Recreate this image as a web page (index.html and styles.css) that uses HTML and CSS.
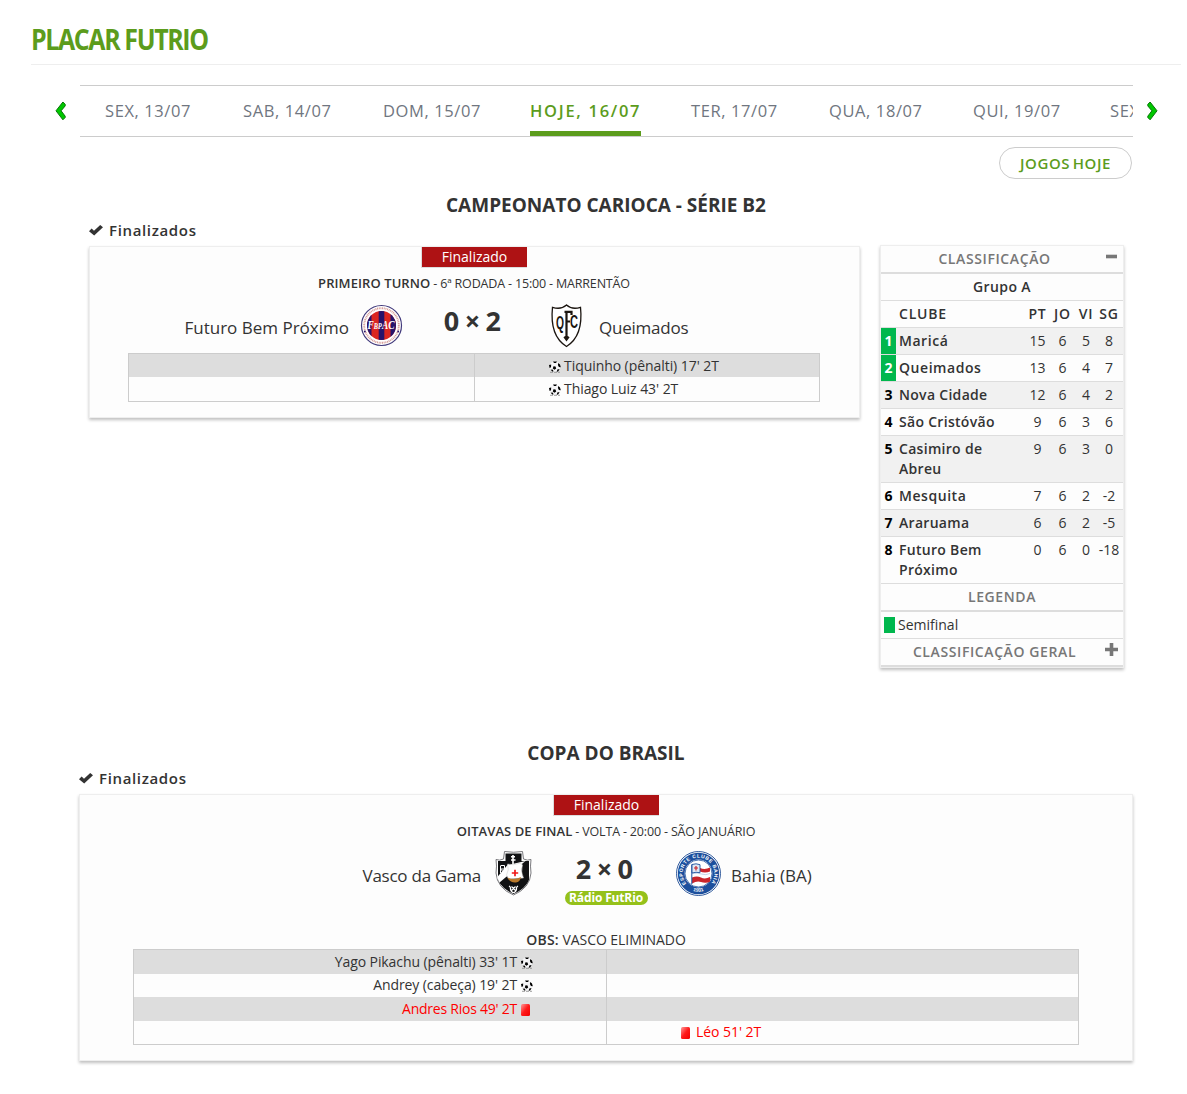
FILE: index.html
```html
<!DOCTYPE html>
<html lang="pt-BR">
<head>
<meta charset="utf-8">
<title>Placar FutRio</title>
<link rel="stylesheet" href="styles.css">
</head>
<body>
<svg class="defs" width="0" height="0" aria-hidden="true">
  <defs>
    <linearGradient id="redcard" x1="0" y1="0" x2="1" y2="1">
      <stop offset="0" stop-color="#ff9c9c"/><stop offset=".5" stop-color="#ff1a1a"/><stop offset="1" stop-color="#f00000"/>
    </linearGradient>
    <clipPath id="vascoShield"><path d="M9 1 Q18 3 27 1 L28 8 Q32 11 35 9 Q34 15 35 22 Q34 36 18 43 Q2 36 1 22 Q2 15 1 9 Q5 11 8 8Z"/></clipPath>
    <clipPath id="bahiaDisc"><circle cx="22.500" cy="22.500" r="14"/></clipPath>
    <clipPath id="futuroDisc"><circle cx="22.500" cy="22.500" r="14.500"/></clipPath>
    <symbol id="ball" viewBox="0 0 12 12">
      <circle cx="6" cy="5.500" r="5.300" fill="#f4f4f6"/>
      <path d="M4 .4h4L7 2H5zM0 4l2.200-.6L2 6.200.6 7zM9.300 2l1.700 1.500.8 2.800-1.900-.4-1-2zM4.500 5.300l2 .3.700 2-1.700 1.200-1.700-1.300zM1.600 8.700l2-.3 1 1.800-1 .5zM8.600 8.200l2 .1-1.500 2.200-1.500.2z" fill="#000"/>
      <path d="M1 11.300h10" stroke="#888" stroke-width=".8" stroke-dasharray="3 1"/>
    </symbol>
    <symbol id="check" viewBox="0 0 14 12">
      <path d="M0 7.200 2.600 4.600 5 6.800 11.200 1 14 3.200 5.200 11.600Z" fill="#333"/>
    </symbol>
  </defs>
</svg>

<header class="page-title"><h1>PLACAR FUTRIO</h1></header>

<nav class="dates">
  <svg class="arrow" viewBox="0 0 11 20"><path d="M7.900 1 1 9.800 7.900 18.800l2.300-2.300v-1.300L6.100 9.800l4.100-4.900V3.300z" fill="#00c800" stroke="#087308"/></svg>
  <div class="date-strip">
    <a>SEX, 13/07</a><a>SAB, 14/07</a><a>DOM, 15/07</a><a class="active">HOJE, 16/07</a><a>TER, 17/07</a><a>QUA, 18/07</a><a>QUI, 19/07</a><a>SEX, 20/07</a>
  </div>
  <svg class="arrow" viewBox="0 0 11 20"><path d="M3.100 1 10 9.800 3.100 18.800.8 16.500v-1.300l4.100-5.400L.8 4.900V3.300z" fill="#00c800" stroke="#087308"/></svg>
</nav>

<main>
  <div class="toolbar"><button class="today">JOGOS HOJE</button></div>

  <section class="league">
    <h2>CAMPEONATO CARIOCA - SÉRIE B2</h2>
    <div class="with-table">
      <div class="games">
        <h3><svg><use href="#check"/></svg>Finalizados</h3>
        <article class="card">
          <div class="badge">Finalizado</div>
          <p class="info"><b>PRIMEIRO TURNO</b><span>- 6ª RODADA - 15:00 - MARRENTÃO</span></p>
          <div class="match">
            <div class="team home">
              <span>Futuro Bem Próximo</span>
              <svg class="crest" viewBox="0 0 45 45">
                <circle cx="22.500" cy="22.500" r="20" fill="#fff" stroke="#423a7c" stroke-width="1.200"/>
                <circle cx="22.500" cy="22.500" r="17.300" fill="none" stroke="#b4483f" stroke-width="1.900" stroke-dasharray="1 .7" opacity=".55"/>
                <g clip-path="url(#futuroDisc)"><path fill="#db2620" d="M8 8h29v29H8z"/><path fill="#27136b" d="M8 8h4.500v29H8zM19.700 8h5.600v29h-5.600zM31.500 8H37v29h-5.500z"/></g>
                <text class="monogram" x="8.500" y="26" textLength="27" lengthAdjust="spacingAndGlyphs">F<tspan class="small">BP</tspan>AC</text>
                <circle cx="5.800" cy="28.500" r=".9" fill="#27136b"/><circle cx="39.200" cy="28.500" r=".9" fill="#27136b"/>
              </svg>
            </div>
            <div class="score"><strong>0 × 2</strong></div>
            <div class="team away">
              <svg class="crest" viewBox="0 0 45 45">
                <path d="M22.500 2Q28 7 36.500 4.300 39.500 33 22.500 43.500 5.500 33 8.500 4.300 17 7 22.500 2Z" fill="#fff" stroke="#1b1510" stroke-width="1.300"/>
                <g class="qfc"><text x="12" y="26" textLength="8" lengthAdjust="spacingAndGlyphs">Q</text><text x="26" y="25" textLength="8" lengthAdjust="spacingAndGlyphs">C</text></g>
                <path d="M20.500 8.800h7v3.200M22.500 9v27M22.500 18.500h3.500M20.300 33.700l2.200 3 2.200-3" fill="none" stroke="#1b1510" stroke-width="2.200"/>
              </svg>
              <span class="queimados">Queimados</span>
            </div>
          </div>
          <div class="events">
            <div></div><div class="right"><svg class="ball"><use href="#ball"/></svg>Tiquinho (pênalti) 17' 2T</div>
            <div></div><div class="right"><svg class="ball"><use href="#ball"/></svg>Thiago Luiz 43' 2T</div>
          </div>
        </article>
      </div>

      <aside class="standings">
        <div class="bar toggle">CLASSIFICAÇÃO<svg viewBox="0 0 13 13"><path d="M1 4.700h11v3.600H1z"/></svg></div>
        <div class="group">Grupo A</div>
        <div class="row head"><i></i><b>CLUBE</b><b>PT</b><b>JO</b><b>VI</b><b>SG</b></div>
        <div class="row odd"><i class="up">1</i><b>Maricá</b><span>15</span><span>6</span><span>5</span><span>8</span></div>
        <div class="row"><i class="up">2</i><b>Queimados</b><span>13</span><span>6</span><span>4</span><span>7</span></div>
        <div class="row odd"><i>3</i><b class="snug">Nova Cidade</b><span>12</span><span>6</span><span>4</span><span>2</span></div>
        <div class="row"><i>4</i><b class="snug">São Cristóvão</b><span>9</span><span>6</span><span>3</span><span>6</span></div>
        <div class="row odd"><i>5</i><b class="snug">Casimiro de Abreu</b><span>9</span><span>6</span><span>3</span><span>0</span></div>
        <div class="row"><i>6</i><b>Mesquita</b><span>7</span><span>6</span><span>2</span><span>-2</span></div>
        <div class="row odd"><i>7</i><b class="snug">Araruama</b><span>6</span><span>6</span><span>2</span><span>-5</span></div>
        <div class="row"><i>8</i><b class="snug">Futuro Bem Próximo</b><span>0</span><span>6</span><span>0</span><span>-18</span></div>
        <div class="bar">LEGENDA</div>
        <div class="legend"><i></i>Semifinal</div>
        <div class="bar toggle">CLASSIFICAÇÃO GERAL<svg viewBox="0 0 13 13"><path d="M4.700 0h3.600v4.700H13v3.600H8.300V13H4.700V8.300H0V4.700h4.700z"/></svg></div>
      </aside>
    </div>
  </section>

  <section class="league cup">
    <h2>COPA DO BRASIL</h2>
    <h3><svg><use href="#check"/></svg>Finalizados</h3>
    <article class="card">
      <div class="badge">Finalizado</div>
      <p class="info"><b>OITAVAS DE FINAL</b><span>- VOLTA - 20:00 - SÃO JANUÁRIO</span></p>
      <div class="match">
        <div class="team home">
          <span class="vasco">Vasco da Gama</span>
          <svg class="crest" viewBox="-4.500 0 45 45">
            <path d="M9 .5Q18 2 27 .5L28 8Q32 10 35.500 8.500 34.500 15 35.500 22 34.500 37 18 44 1.500 37 .5 22 1.500 15 .5 8.500 4 10 8 8Z" fill="#fff" stroke="#6a6a6e" stroke-width=".9"/>
            <g clip-path="url(#vascoShield)">
              <path fill="#111214" d="M2.500 10h31v35h-31zM10 2.500h16V12H10z"/>
              <path fill="#fff" d="M30 10 1 34V27L12 14z"/>
            </g>
            <path d="M17.500 4v9M15.500 5.800h4M15.500 9h4.500" stroke="#fff" stroke-width="1.600"/>
            <path d="M12 13q6 2 13-1l2 2q-2 7 1 13l-15 1-2-4q3-5 1-11z" fill="#fff" stroke="#c8c8c8" stroke-width=".5"/>
            <path d="M19.500 18.800v6.400M16.300 22h6.400" stroke="#f01818" stroke-width="1.700"/>
            <path d="M12 26.500q7 3 13.500-.5-1 5-5 5.500-6 .5-8.500-5z" fill="#b9792b"/>
            <path d="M5 14.500h4v3.500H5l4 4M5 22v-7" fill="none" stroke="#fff"/>
            <path d="M13.500 35q2 1 1.500 3.500 1 3 3 3t3-3q-.5-2.500 1.500-3.500M16 35.500l4 4m0-4-4 4" fill="none" stroke="#fff" stroke-width="1.200"/>
          </svg>
        </div>
        <div class="score"><strong>2 × 0</strong><span class="radio">Rádio FutRio</span></div>
        <div class="team away">
          <svg class="crest" viewBox="0 0 45 45">
            <circle cx="22.500" cy="22.500" r="22" fill="#fff" stroke="#1c4a92" stroke-width=".9"/>
            <circle cx="22.500" cy="22.500" r="17.300" fill="none" stroke="#1c4f9d" stroke-width="6.800"/>
            <path id="bahiaArc" d="M11 33.300A15.800 15.800 0 1 1 34 33.300" fill="none"/>
            <path id="bahiaFoot" d="M14.500 39Q22.500 42.500 30.500 39" fill="none"/>
            <g class="ring"><text><textPath href="#bahiaArc" textLength="70" startOffset="1">ESPORTE CLUBE BAHIA</textPath></text><text><textPath href="#bahiaFoot" startOffset="2.500">1931</textPath></text></g>
            <circle cx="22.500" cy="22.500" r="13.500" fill="#fff" stroke="#1c4f9d" stroke-width=".8"/>
            <g clip-path="url(#bahiaDisc)">
              <path d="M24 17q5 2 10-.5v4q-5 2-10 0zM16 26.500q5-2 9 0t9-.5v5q-5 1.500-9 0t-9 1.500z" fill="#ca252b"/>
              <path d="M16.500 22.500q5-1 9 .5t8.500-.5" fill="none" stroke="#9db4d6" stroke-width=".6"/>
              <path d="M15.800 13.500V33" stroke="#1c4f9d"/>
              <path d="M16 13.500q4-1.500 8 .2v8q-4-1-8 .3z" fill="#dfe8f4" stroke="#1c4f9d" stroke-width=".9"/>
              <path d="M18 17h4M20 15v4.500" stroke="#ca252b" stroke-width="1.200"/>
            </g>
          </svg>
          <span>Bahia (BA)</span>
        </div>
      </div>
      <p class="obs"><b>OBS:</b> VASCO ELIMINADO</p>
      <div class="events">
        <div class="left">Yago Pikachu (pênalti) 33' 1T<svg class="ball"><use href="#ball"/></svg></div><div></div>
        <div class="left">Andrey (cabeça) 19' 2T<svg class="ball"><use href="#ball"/></svg></div><div></div>
        <div class="left sent-off">Andres Rios 49' 2T<svg class="red" viewBox="0 0 9 12"><rect width="9" height="12" rx="1.500" fill="url(#redcard)"/></svg></div><div></div>
        <div></div><div class="right sent-off"><svg class="red" viewBox="0 0 9 12"><rect width="9" height="12" rx="1.500" fill="url(#redcard)"/></svg>Léo 51' 2T</div>
      </div>
    </article>
  </section>
</main>
</body>
</html>
```
FILE: styles.css
```css
* { box-sizing: border-box; }
body {
  margin: 0;
  padding: 19px 6px 32px 31px;
  background: #fff;
  color: #333;
  font: 14px/20px "Open Sans", "Noto Sans", sans-serif;
}
h1, h2, h3, p { margin: 0; }
b { font-weight: 600; }
i { font-style: normal; }
svg { display: block; flex: none; }
.defs { position: absolute; }

.page-title {
  height: 46px;
  border-bottom: 1px solid #eee;
}
h1 {
  width: max-content;
  font-size: 29px;
  line-height: 40px;
  font-weight: 700;
  letter-spacing: -1.600px;
  color: #5c9c1c;
  white-space: nowrap;
  transform: scaleX(.86);
  transform-origin: left;
}

.dates {
  display: flex;
  align-items: center;
  gap: 14px;
  margin: 20px 0 0 24px;
}
.arrow { width: 11px; height: 20px; }
.date-strip {
  flex: none;
  width: 1053px;
  height: 52px;
  padding-left: 25px;
  display: grid;
  grid-template-columns: 138px 140px 147px 161px 138px 144px 137px 138px;
  border: solid #ccc;
  border-width: 1px 0;
  overflow: hidden;
}
.date-strip a {
  justify-self: start;
  height: 50px;
  font-size: 16.500px;
  line-height: 50px;
  letter-spacing: .6px;
  color: #707680;
  white-space: nowrap;
}
.date-strip .active {
  width: 111px;
  border-bottom: 5px solid #5c9c1c;
  font-weight: 600;
  letter-spacing: 1.700px;
  color: #5c9c1c;
}

main { width: 1054px; margin-left: 48px; }
.toolbar {
  display: flex;
  justify-content: flex-end;
  padding: 10px 1px 0 0;
}
.today {
  width: 133px;
  height: 32px;
  padding: 0;
  border: 1px solid #ccc;
  border-radius: 16px;
  background: #fff;
  color: #5c9c1c;
  font: 600 15px/30px "Open Sans", sans-serif;
  letter-spacing: .6px;
  word-spacing: -2px;
}

.league { padding-top: 16px; }
h2 {
  font-size: 20px;
  line-height: 20px;
  font-weight: 700;
  text-align: center;
  transform: scaleX(.95);
}
h3 {
  display: flex;
  align-items: center;
  gap: 6px;
  height: 20px;
  margin-top: 5px;
  font-size: 15px;
  font-weight: 600;
  letter-spacing: .65px;
}
h3 svg { width: 14px; height: 12px; }
.with-table {
  display: flex;
  align-items: flex-start;
  gap: 20px;
  padding-left: 10px;
}
.games { width: 771px; }
.cup { padding-top: 75px; }

.card {
  margin-top: 6px;
  padding-bottom: 15px;
  border: 1px solid #eee;
  background: #fdfdfd;
  box-shadow: 0 2px 3px rgba(0, 0, 0, .25);
}
.games .card { padding-right: 1px; }
.badge {
  width: 106px;
  height: 21px;
  margin: 0 auto;
  border: solid #ddd;
  border-width: 0 0 1px 1px;
  background: #ae1214;
  color: #fff;
  line-height: 20px;
  text-align: center;
}
.info {
  display: flex;
  justify-content: center;
  align-items: baseline;
  gap: 3px;
  height: 20px;
  margin-top: 5px;
  font-size: 13px;
  white-space: nowrap;
}
.info b { letter-spacing: .08px; }
.info span { font-size: 12.500px; letter-spacing: -.17px; }
.match {
  display: grid;
  grid-template-columns: 1fr 140px 1fr;
  grid-template-rows: 45px;
  margin-top: 10px;
}
.team {
  display: flex;
  align-items: center;
  gap: 10px;
  font-size: 17px;
}
.team span { padding-top: 4px; white-space: nowrap; }
.home { justify-content: flex-end; }
.vasco { letter-spacing: -.25px; }
.queimados { letter-spacing: -.22px; }
.crest { width: 45px; height: 45px; }
.monogram { fill: #fff; font: italic 700 12px "Liberation Serif", serif; }
.monogram .small { font-size: 8px; }
.qfc { fill: #1b1510; font: 700 19px "Liberation Sans", sans-serif; }
.ring { fill: #fff; font: 700 5px "Liberation Sans", sans-serif; }
.score {
  display: flex;
  flex-direction: column;
  align-items: center;
  padding: 3px 4px 0 0;
}
.score strong {
  font-size: 27px;
  line-height: 30px;
  font-weight: 700;
  letter-spacing: -.8px;
}
.radio {
  width: 83px;
  height: 14px;
  margin: 7px 0 0 4px;
  border-radius: 7px;
  background: #95c11a;
  color: #fff;
  font-size: 12px;
  line-height: 14px;
  font-weight: 700;
  letter-spacing: -.15px;
  text-align: center;
  white-space: nowrap;
}
.obs {
  margin-top: 34px;
  height: 19px;
  text-align: center;
  letter-spacing: -.06px;
}
.obs b { letter-spacing: .2px; }

.events {
  display: grid;
  grid-template-columns: 1fr 344px;
  width: 692px;
  margin: 5px auto 0;
  border: 1px solid #ccc;
}
.cup .events { grid-template-columns: 1fr 471px; width: 946px; margin-top: 0; }
.events div {
  display: flex;
  align-items: center;
  height: 24px;
  white-space: nowrap;
}
.games .events div:nth-child(-n+2) { height: 23px; }
.cup .events div { height: 23.500px; }
.events div:nth-child(odd) { border-right: 1px solid #ccc; }
.events div:nth-child(4n+1), .events div:nth-child(4n+2) { background: #ddd; }
.left { justify-content: flex-end; padding-right: 73px; gap: 4px; letter-spacing: -.1px; }
.right { padding-left: 74px; gap: 3px; letter-spacing: -.06px; }
.ball { width: 12px; height: 12px; margin-top: 2px; }
.red { width: 9px; height: 12px; margin-top: 2px; }
.left .red { margin-right: 3px; }
.right .red { margin-right: 3px; }
.events .sent-off { color: #f00; }
.left.sent-off { letter-spacing: -.24px; }

.standings {
  width: 244px;
  margin-top: 30px;
  border: 1px solid #eee;
  background: #fdfdfd;
  box-shadow: 0 2px 3px rgba(0, 0, 0, .25);
}
.bar {
  display: flex;
  justify-content: center;
  position: relative;
  height: 28px;
  border-bottom: 2px solid #ddd;
  color: #777;
  font-weight: 600;
  line-height: 26px;
  letter-spacing: .6px;
}
.toggle { padding-right: 15px; }
.bar svg { position: absolute; right: 5px; top: 4px; width: 13px; height: 13px; fill: #777; }
.group {
  height: 27px;
  border-bottom: 1px solid #ddd;
  font-weight: 600;
  line-height: 26px;
  letter-spacing: .4px;
  text-align: center;
}
.row {
  display: grid;
  grid-template-columns: 15px 1fr 25px 25px 22px 24px;
  padding-right: 2px;
  border-bottom: 1px solid #ddd;
  text-align: center;
}
.row > * { padding: 3px 0; }
.row b { letter-spacing: .55px; white-space: nowrap; }
.row i { color: #000; font-weight: 700; }
.row i + b { padding: 3px 20px 3px 3px; text-align: left; white-space: normal; }
.row .snug { letter-spacing: .3px; }
.head b { letter-spacing: .8px; }
.odd { background: #f1f1f1; }
.row .up { background: #00b74d; color: #fff; }
.legend {
  display: flex;
  align-items: center;
  gap: 3px;
  height: 27px;
  padding-left: 3px;
  border-bottom: 1px solid #ddd;
}
.legend i { width: 11px; height: 16px; background: #00b74d; }
```
